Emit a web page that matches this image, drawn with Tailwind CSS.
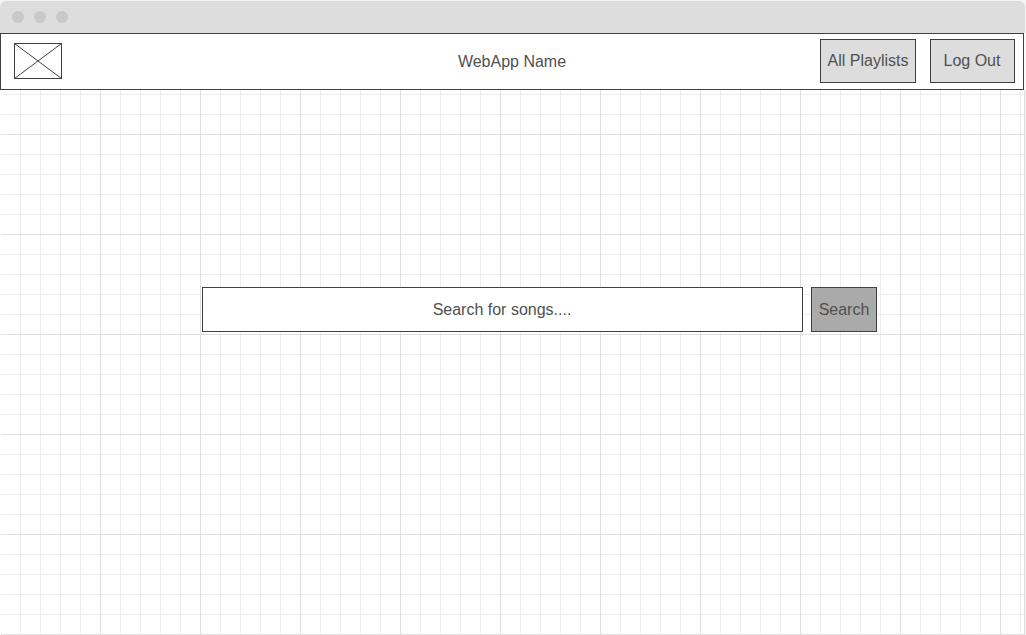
<!DOCTYPE html>
<html lang="en">
<head>
<meta charset="utf-8">
<title>WebApp Name</title>
<script src="https://cdn.jsdelivr.net/npm/@tailwindcss/browser@4"></script>
</head>
<body class="h-[635px] w-[1026px] overflow-hidden bg-[#f4f4f4] pt-px font-['Liberation_Sans',Arial,sans-serif] text-base text-[#505050]">
<div class="flex h-[634px] w-[1025px] flex-col overflow-hidden rounded-t-[6px] bg-white">
  <div class="flex h-8 shrink-0 items-center gap-2.5 bg-[#dddddd] pl-3">
    <span class="size-3 rounded-full bg-[#c9c9c9]"></span>
    <span class="size-3 rounded-full bg-[#c9c9c9]"></span>
    <span class="size-3 rounded-full bg-[#c9c9c9]"></span>
  </div>
  <header class="grid h-[57px] w-[1024px] shrink-0 grid-cols-[1fr_auto_1fr] items-center border border-[#404040] bg-white">
    <svg class="mb-0.5 ml-[13px] h-9 w-12" viewBox="0 0 48 36" fill="none" stroke="#404040" stroke-width="1">
      <rect x=".5" y=".5" width="47" height="35"/>
      <path d="M.5.5l47 35M47.5.5l-47 35"/>
    </svg>
    <h1>WebApp Name</h1>
    <nav class="mr-2 flex justify-end gap-3.5 pb-px">
      <button class="h-11 w-24 whitespace-nowrap border border-[#404040] bg-[#dddddd]">All Playlists</button>
      <button class="h-11 w-[85px] whitespace-nowrap border border-[#404040] bg-[#dddddd] pr-px">Log Out</button>
    </nav>
  </header>
  <main class="relative grow border-r border-[#dddddd] pl-[202px] pt-[197px]">
    <svg class="absolute inset-0 h-[545px] w-[1024px]" aria-hidden="true">
      <defs>
        <pattern id="minor" width="20" height="20" patternUnits="userSpaceOnUse" y="4">
          <path d="M0 .5h20M.5 0v20" stroke="#ededed"/>
        </pattern>
        <pattern id="major" width="100" height="100" patternUnits="userSpaceOnUse" y="44">
          <path d="M0 .5h100M.5 0v100" stroke="#dfdfdf"/>
        </pattern>
      </defs>
      <rect x="1" width="1023" height="545" fill="url(#minor)"/>
      <rect x="1" width="1023" height="545" fill="url(#major)"/>
    </svg>
    <form class="relative flex gap-2">
      <input type="text" aria-label="Search for songs" placeholder="Search for songs...." class="h-[45px] w-[601px] border border-[#404040] bg-white pr-px text-center placeholder:text-[#505050]">
      <button type="button" class="h-[45px] w-[66px] border border-[#404040] bg-[#aaaaaa]">Search</button>
    </form>
  </main>
</div>
</body>
</html>
